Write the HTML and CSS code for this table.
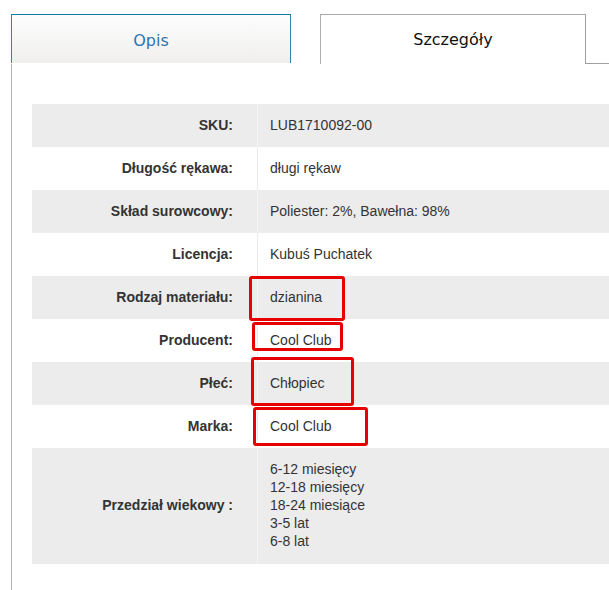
FILE: index.html
```html
<!DOCTYPE html>
<html lang="pl">
<head>
<meta charset="utf-8">
<title>Szczegóły</title>
<link rel="stylesheet" href="styles.css">
</head>
<body>
<div class="page">
  <div class="tabs">
    <div class="tab tab-inactive">Opis</div>
    <div class="tab tab-active">Szczegóły</div>
    <div class="tab-filler"></div>
  </div>
  <div class="panel">
    <table class="details">
      <tr class="odd"><td class="label">SKU:</td><td class="value">LUB1710092-00</td></tr>
      <tr class="even"><td class="label">Długość rękawa:</td><td class="value">długi rękaw</td></tr>
      <tr class="odd"><td class="label">Skład surowcowy:</td><td class="value">Poliester: 2%, Bawełna: 98%</td></tr>
      <tr class="even"><td class="label">Licencja:</td><td class="value">Kubuś Puchatek</td></tr>
      <tr class="odd"><td class="label">Rodzaj materiału:</td><td class="value">dzianina</td></tr>
      <tr class="even"><td class="label">Producent:</td><td class="value">Cool Club</td></tr>
      <tr class="odd"><td class="label">Płeć:</td><td class="value">Chłopiec</td></tr>
      <tr class="even"><td class="label">Marka:</td><td class="value">Cool Club</td></tr>
      <tr class="odd last"><td class="label">Przedział wiekowy :</td><td class="value">6-12 miesięcy<br>12-18 miesięcy<br>18-24 miesiące<br>3-5 lat<br>6-8 lat</td></tr>
    </table>
  </div>
  <div class="mark mark-1"></div>
  <div class="mark mark-2"></div>
  <div class="mark mark-3"></div>
  <div class="mark mark-4"></div>
</div>
</body>
</html>
```

FILE: styles.css
```css
html, body {
  margin: 0;
  padding: 0;
  background: #ffffff;
  overflow: hidden;
}

.page {
  position: relative;
  width: 609px;
  height: 590px;
  padding-top: 14px;
  box-sizing: border-box;
  font-family: "Liberation Sans", Arial, sans-serif;
  color: #333333;
}

.tabs {
  display: flex;
  align-items: flex-start;
  height: 50px;
}

.tab {
  box-sizing: border-box;
  display: flex;
  align-items: center;
  justify-content: center;
  font-family: "Comic Sans MS", "DejaVu Sans", sans-serif;
  font-size: 16px;
}

.tab-inactive {
  margin-left: 11px;
  width: 280px;
  height: 49px;
  border-top: 1px solid #1a78a4;
  border-left: 1px solid #2a86ad;
  border-right: 1px solid #2a86ad;
  background: linear-gradient(#fdfdfd, #f0efee);
  color: #2e74ae;
  padding-top: 2px;
}

.tab-active {
  margin-left: 29px;
  width: 266px;
  height: 50px;
  border-top: 1px solid #a8a8a8;
  border-left: 1px solid #b0b0b0;
  border-right: 1px solid #a0a0a0;
  background: #ffffff;
  color: #111111;
  padding-bottom: 1px;
}

.tab-filler {
  flex: 1;
  height: 50px;
  box-sizing: border-box;
  border-bottom: 1px solid #a0a0a0;
}

.panel {
  margin-left: 11px;
  border-left: 1px solid #b4b4b4;
  padding: 40px 0 0 20px;
  height: 526px;
  box-sizing: border-box;
}

.details {
  border-collapse: collapse;
  width: 600px;
  font-size: 14px;
  line-height: 18px;
}

.details td {
  padding: 12px 0 13px 0;
  vertical-align: middle;
}

.details tr.odd {
  background: #ececec;
}

.details tr.even {
  background: #ffffff;
}

.details tr.last td {
  padding: 12px 0 14px 0;
}

.label {
  width: 201px;
  padding-right: 24px !important;
  text-align: right;
  font-weight: bold;
  color: #333333;
}

.odd .label {
  border-right: 1px solid #f5f5f5;
}

.even .label {
  border-right: 1px solid #ebebeb;
}

.value {
  padding-left: 12px !important;
  color: #333333;
}

.mark {
  position: absolute;
  box-sizing: border-box;
  border: 3px solid #e60000;
  border-radius: 3px;
}

.mark-1 { left: 249px; top: 276px; width: 96px; height: 45px; }
.mark-2 { left: 252px; top: 322px; width: 91px; height: 29px; }
.mark-3 { left: 251px; top: 357px; width: 103px; height: 49px; }
.mark-4 { left: 253px; top: 407px; width: 115px; height: 39px; }
```
